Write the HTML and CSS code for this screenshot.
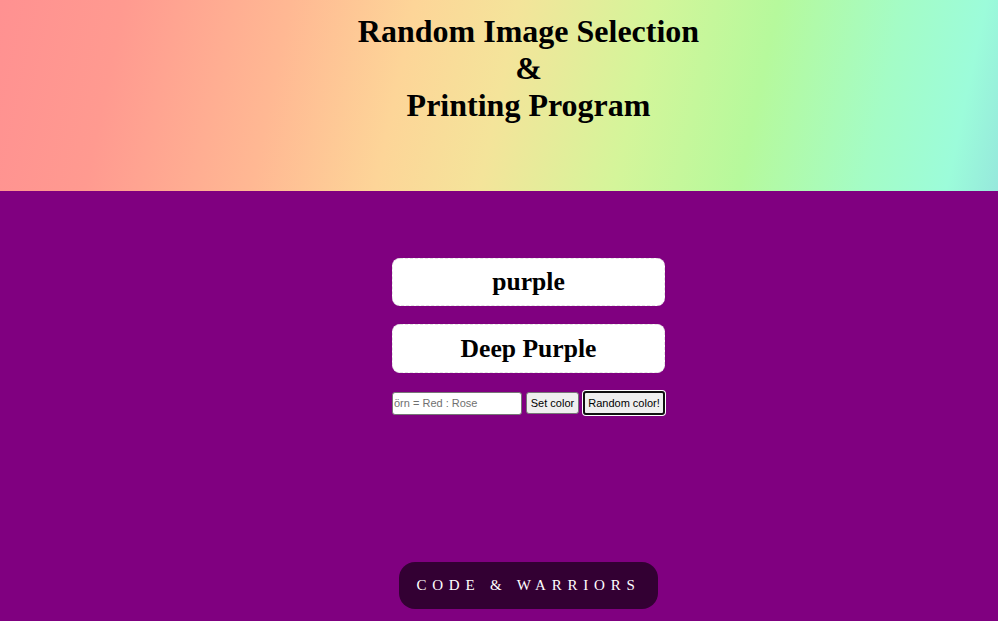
FILE: index.html
```html
<!DOCTYPE html>
<html lang="tr">
<head>
<meta charset="utf-8">
<title>Random Image Selection</title>
<link rel="stylesheet" href="styles.css">
</head>
<body>
<header class="hero">
  <h1 class="title">Random Image Selection<br>&amp;<br>Printing Program</h1>
</header>
<main class="stage">
  <div class="card"><h2 class="card-text">purple</h2></div>
  <div class="card card-second"><h2 class="card-text">Deep Purple</h2></div>
  <div class="controls">
    <input class="color-input" type="text" placeholder="örn = Red : Rose">
    <button class="btn btn-set" type="button">Set color</button>
    <button class="btn btn-focus" type="button">Random color!</button>
  </div>
</main>
<footer class="footer">
  <div class="badge">CODE &amp; WARRIORS</div>
</footer>
</body>
</html>
```
FILE: styles.css
```css
html, body {
  margin: 0;
  padding: 0;
}
body {
  background: #800080;
  font-family: "Liberation Serif", "Times New Roman", serif;
  width: 998px;
  height: 621px;
  overflow: hidden;
  display: flex;
  flex-direction: column;
}
.hero {
  height: 191px;
  box-sizing: border-box;
  padding: 13px 0 0 59px;
  background: linear-gradient(102deg, #ff9191 0%, #ff9a90 12%, #ffb893 28%, #fdd598 40%, #f4e49a 50%, #d4f59a 63%, #b6f99c 75%, #a4fcc6 87%, #9cfcda 95%, #96e8dc 100%);
}
.title {
  margin: 0;
  text-align: center;
  font-size: 32px;
  font-weight: bold;
  color: #000;
}
.stage {
  padding: 67px 0 0 59px;
  display: flex;
  flex-direction: column;
  align-items: center;
}
.card {
  width: 273px;
  height: 48px;
  box-sizing: border-box;
  background: #fff;
  border: 1px dashed #e4e4e4;
  border-radius: 8px;
  display: flex;
  align-items: center;
  justify-content: center;
}
.card-second {
  margin-top: 18px;
  height: 49px;
}
.card-text {
  margin: 0;
  font-size: 25.6px;
  font-weight: bold;
  color: #000;
}
.controls {
  margin-top: 18px;
  width: 273px;
  display: flex;
  align-items: center;
}
.color-input {
  width: 130px;
  height: 23px;
  box-sizing: border-box;
  margin: 0;
  padding: 1px 1px;
  border: 1px solid #767676;
  border-radius: 3px;
  font-family: "Liberation Sans", Arial, sans-serif;
  font-size: 11px;
  background: #fff;
}
.color-input::placeholder {
  color: #707070;
}
.btn {
  height: 22px;
  box-sizing: border-box;
  white-space: nowrap;
  border: 1px solid #767676;
  border-radius: 3px;
  background: #efefef;
  font-family: "Liberation Sans", Arial, sans-serif;
  font-size: 11px;
  color: #000;
  display: flex;
  align-items: center;
  justify-content: center;
}
.btn-set {
  margin: 0 0 0 4px;
  width: 53px;
  padding: 0;
}
.btn-focus {
  margin: 0 0 0 4px;
  width: 82px;
  height: 24px;
  padding: 0;
  border: 2px solid #101010;
  box-shadow: 0 0 0 1px #fff;
}
.footer {
  margin-top: auto;
  padding: 0 0 12px 59px;
  display: flex;
  justify-content: center;
}
.badge {
  width: 259px;
  height: 47px;
  box-sizing: border-box;
  background: #330033;
  border-radius: 16px;
  color: #fff;
  font-size: 15px;
  letter-spacing: 5.8px;
  display: flex;
  align-items: center;
  justify-content: center;
  padding-left: 0;
}
```
